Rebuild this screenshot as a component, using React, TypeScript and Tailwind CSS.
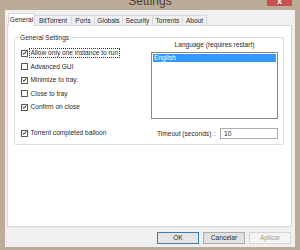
import React from 'react';

const tabs = [
  { label: 'General', w: 'w-[27px]' },
  { label: 'BitTorrent', w: 'w-[37px]' },
  { label: 'Ports', w: 'w-[23px]' },
  { label: 'Globals', w: 'w-[28px]' },
  { label: 'Security', w: 'w-[30px]' },
  { label: 'Torrents', w: 'w-[30px]' },
  { label: 'About', w: 'w-[24px]' },
];

const Check = ({ checked }: { checked: boolean }) => (
  <span className="w-[7px] h-[7px] border border-[#5a5a5a] bg-white flex items-center justify-center shrink-0">
    {checked && (
      <svg width="6" height="6" viewBox="0 0 6 6">
        <path d="M0.8 3 L2.4 4.6 L5.2 1" fill="none" stroke="#1a1a1a" strokeWidth="1.2" />
      </svg>
    )}
  </span>
);

const Row = ({ label, checked, focus = false }: { label: string; checked: boolean; focus?: boolean }) => (
  <div className="h-[13.5px] flex items-center gap-[1.5px]">
    <Check checked={checked} />
    <span className={focus ? 'outline-1 outline-dotted outline-[#333] px-[1px] leading-[8px]' : 'px-[1px] leading-[8px]'}>
      {label}
    </span>
  </div>
);

export default function App() {
  return (
    <div
      className="w-[300px] h-[250px] bg-[#bcab99] flex flex-col overflow-hidden text-[6.6px] text-[#2a2a2a]"
      style={{ fontFamily: '"Liberation Sans", Arial, sans-serif' }}
    >
      {/* title bar */}
      <div className="h-[10px] relative flex justify-center overflow-hidden">
        <span className="text-[12px] leading-[12px] -mt-[5px] text-[#4a4038]">Settings</span>
        <div className="absolute right-[8px] top-0 w-[25px] h-[6px] bg-[#c75050] flex justify-center overflow-hidden">
          <span className="text-white text-[9px] leading-[9px] -mt-[3px] font-bold">x</span>
        </div>
      </div>

      <div className="flex-1 mx-[5px] mb-[3px] bg-[#f0f0f0] pl-[2px] pr-[3px] flex flex-col">
        {/* tabs */}
        <div className="h-[15px] flex items-end pl-[1px]">
          {tabs.map((t, i) =>
            i === 0 ? (
              <div
                key={t.label}
                className={`${t.w} h-[13px] bg-white border border-b-0 border-[#d9d9d9] flex items-center justify-center relative z-10 -mb-[1px] pb-[1px]`}
              >
                {t.label}
              </div>
            ) : (
              <div
                key={t.label}
                className={`${t.w} h-[10px] bg-[#f0f0f0] border border-b-0 border-l-0 border-[#d9d9d9] flex items-center justify-center`}
              >
                {t.label}
              </div>
            )
          )}
        </div>

        {/* panel */}
        <div className="h-[202px] bg-white border border-[#d9d9d9] pl-[6px] pt-[11px]">
          <div className="w-[270px] h-[108px] border border-[#dcdcdc] rounded-[2px] relative flex">
            <span className="absolute left-[4px] -top-[4px] bg-white px-[1px] leading-[8px]">General Settings</span>
            <div className="w-[136px] pl-[6px] pt-[8.5px] flex flex-col">
              <Row label="Allow only one instance to run" checked focus />
              <Row label="Advanced GUI" checked={false} />
              <Row label="Minimize to tray." checked />
              <Row label="Close to tray" checked={false} />
              <Row label="Confirm on close" checked />
              <div className="mt-[12.5px]">
                <Row label="Torrent completed balloon" checked />
              </div>
            </div>
            <div className="w-[127px] pt-[3px] flex flex-col">
              <div className="h-[8px] leading-[8px] text-center">Language (requires restart)</div>
              <div className="mt-[3px] h-[67px] border border-[#828790] bg-white p-[1px]">
                <div className="h-[8px] bg-[#3399ff] text-white leading-[8px] pl-[1px]">English</div>
              </div>
              <div className="mt-[9px] h-[11px] flex items-center justify-end gap-[5px]">
                <span>Timeout (seconds) :</span>
                <div className="w-[58px] h-[11px] border border-[#abadb3] bg-white flex items-center pl-[3px]">10</div>
              </div>
            </div>
          </div>
        </div>

        {/* buttons */}
        <div className="mt-[5px] h-[12px] flex justify-end gap-[4px] pr-[1px]">
          <div className="w-[42px] h-[12px] border border-[#3c7fb1] bg-[#e5e5e5] flex items-center justify-center">OK</div>
          <div className="w-[42px] h-[12px] border border-[#acacac] bg-[#e1e1e1] flex items-center justify-center">Cancelar</div>
          <div className="w-[42px] h-[12px] border border-[#d5d5d5] bg-[#f4f4f4] text-[#a0a0a0] flex items-center justify-center">Aplicar</div>
        </div>
      </div>
    </div>
  );
}
